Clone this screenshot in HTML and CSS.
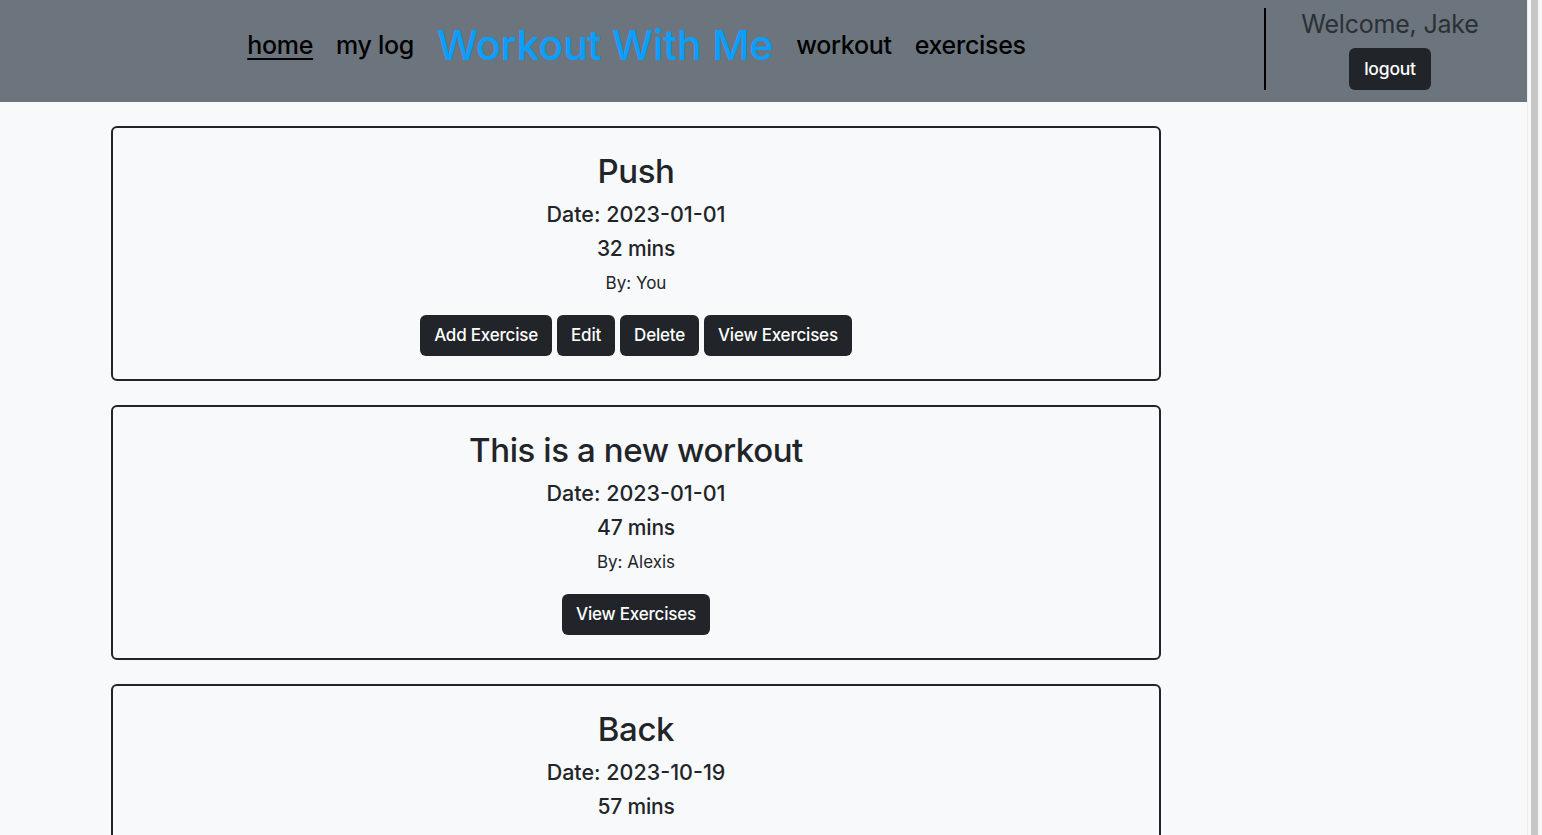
FILE: index.html
```html
<!DOCTYPE html>
<html lang="en">
<head>
<meta charset="utf-8">
<title>Workout With Me</title>
<link rel="stylesheet" href="styles.css">
</head>
<body>
<div class="page">
  <header class="topbar">
    <div class="topbar-left">
      <nav class="nav">
        <a class="nav-link active" href="#">home</a>
        <a class="nav-link" href="#">my log</a>
        <a class="brand" href="#">Workout With Me</a>
        <a class="nav-link" href="#">workout</a>
        <a class="nav-link" href="#">exercises</a>
      </nav>
    </div>
    <div class="topbar-right">
      <div class="welcome">Welcome, Jake</div>
      <button class="btn btn-logout">logout</button>
    </div>
  </header>
  <main class="feed">
    <section class="card">
      <h2 class="card-title">Push</h2>
      <div class="card-date">Date: 2023-01-01</div>
      <div class="card-mins">32 mins</div>
      <div class="card-by">By: You</div>
      <div class="card-actions">
        <button class="btn">Add Exercise</button>
        <button class="btn">Edit</button>
        <button class="btn">Delete</button>
        <button class="btn">View Exercises</button>
      </div>
    </section>
    <section class="card">
      <h2 class="card-title">This is a new workout</h2>
      <div class="card-date">Date: 2023-01-01</div>
      <div class="card-mins">47 mins</div>
      <div class="card-by">By: Alexis</div>
      <div class="card-actions">
        <button class="btn">View Exercises</button>
      </div>
    </section>
    <section class="card">
      <h2 class="card-title">Back</h2>
      <div class="card-date">Date: 2023-10-19</div>
      <div class="card-mins">57 mins</div>
    </section>
  </main>
</div>
<div class="scrollbar" aria-hidden="true">
  <div class="scrollbar-thumb"></div>
</div>
</body>
</html>
```
FILE: styles.css
```css
html, body {
  margin: 0;
  padding: 0;
}
body {
  background: #f8f9fa;
  font-family: Inter, "Liberation Sans", sans-serif;
  color: #212529;
  display: flex;
  height: 100vh;
  overflow: hidden;
}
.page {
  flex: 1;
  min-width: 0;
  height: 100vh;
  overflow: hidden;
}
.scrollbar {
  width: 15px;
  flex: none;
  height: 100vh;
  box-sizing: border-box;
  background: #f7f7f7;
  border-left: 1px solid #ededed;
  padding: 0 4px 0 3px;
}
.scrollbar-thumb {
  height: 100%;
  background: #c6c6c6;
}
.topbar {
  display: flex;
  background: #6c757d;
  height: 102px;
  box-sizing: border-box;
  padding: 8px 0 12px;
}
.topbar-left {
  flex: 1;
  display: flex;
  justify-content: center;
  align-items: center;
  padding: 0 0 8px 9px;
}
.nav {
  display: flex;
  align-items: center;
  gap: 23px;
}
.nav-link {
  color: #000;
  text-decoration: none;
  font-size: 25px;
  font-weight: 500;
  letter-spacing: -0.3px;
}
.nav-link.active {
  text-decoration: underline;
  text-underline-offset: 4px;
  text-decoration-thickness: 2px;
}
.brand {
  color: #0a9eff;
  text-decoration: none;
  font-size: 41px;
  font-weight: 500;
  letter-spacing: -0.2px;
}
.topbar-right {
  width: 248px;
  padding-right: 13px;
  border-left: 2px solid #000;
  display: flex;
  flex-direction: column;
  align-items: center;
}
.welcome {
  font-size: 25px;
  line-height: 32px;
  color: #2b3035;
  margin-bottom: 8px;
  letter-spacing: -0.2px;
}
.btn {
  background: #212529;
  color: #fff;
  border: none;
  border-radius: 6px;
  font-family: Inter, "Liberation Sans", sans-serif;
  font-size: 17px;
  font-weight: 500;
  line-height: 27px;
  padding: 7px 14px;
  letter-spacing: -0.2px;
}
.btn-logout {
  font-size: 17.5px;
  line-height: 28px;
  padding: 7px 15px;
}
.feed {
  display: flex;
  flex-direction: column;
  gap: 24px;
  padding: 24px 0 0 111px;
}
.card {
  width: 1050px;
  min-height: 255px;
  box-sizing: border-box;
  border: 2px solid #212529;
  border-radius: 6px;
  padding: 24px 0 22px;
  display: flex;
  flex-direction: column;
  align-items: center;
  text-align: center;
}
.card-title {
  margin: 0;
  font-size: 33px;
  line-height: 38px;
  font-weight: 500;
  letter-spacing: -0.4px;
}
.card-date {
  margin-top: 11px;
  font-size: 21.5px;
  line-height: 26px;
  font-weight: 500;
}
.card-mins {
  margin-top: 9px;
  font-size: 21px;
  line-height: 26px;
  font-weight: 500;
  letter-spacing: -0.2px;
}
.card-by {
  margin-top: 8px;
  font-size: 17px;
  line-height: 27px;
}
.card-actions {
  margin-top: 18px;
  display: flex;
  gap: 5px;
}
```
